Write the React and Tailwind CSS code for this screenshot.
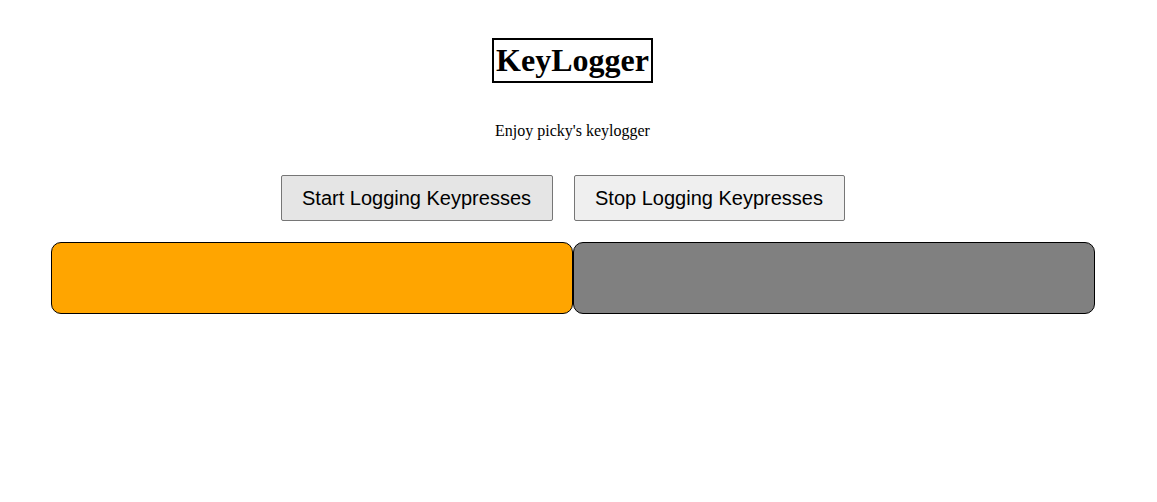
export default function App() {
  return (
    <div className="min-h-screen bg-white font-['Liberation_Serif',serif] text-black">
      <div className="flex flex-col items-center pt-[38px] pr-[12px]">
        <h1 className="inline-block border-2 border-black px-[2.5px] py-[2px] text-[32px] font-bold leading-[37px]">
          KeyLogger
        </h1>
        <p className="mt-[39px] text-[16px] leading-[18px]">Enjoy picky's keylogger</p>
        <div className="mt-[35px] flex gap-[21px] pr-[20px]">
          <button className="w-[272px] h-[46px] rounded-[2px] border border-[#767676] bg-[#e5e5e5] font-['Liberation_Sans',Arial,sans-serif] text-[20px] text-black">
            Start Logging Keypresses
          </button>
          <button className="w-[271px] h-[46px] rounded-[2px] border border-[#767676] bg-[#efefef] font-['Liberation_Sans',Arial,sans-serif] text-[20px] text-black">
            Stop Logging Keypresses
          </button>
        </div>
      </div>
      <div className="mt-[21px] flex pl-[51px]">
        <div className="h-[72px] w-[522px] rounded-[10px] border border-black bg-[#ffa500]" />
        <div className="h-[72px] w-[522px] rounded-[10px] border border-black bg-[#808080]" />
      </div>
    </div>
  );
}
